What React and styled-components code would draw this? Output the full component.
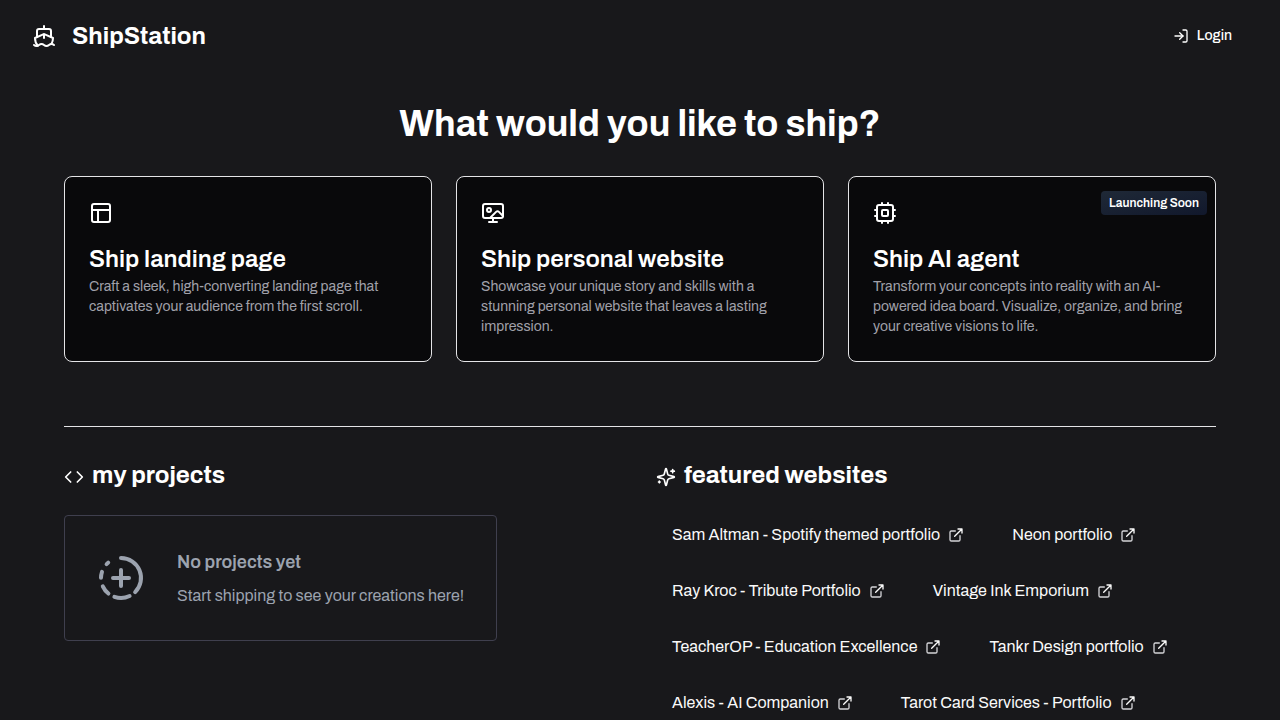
import React from "react";
import styled, { createGlobalStyle } from "styled-components";
import { Ship, LogIn, PanelsTopLeft, Wallpaper, Code } from "lucide-react";

const GlobalStyle = createGlobalStyle`
  *, *::before, *::after { box-sizing: border-box; }
  body {
    margin: 0;
    background: #18181b;
    color: #fafafa;
    font-family: Archivo, "Liberation Sans", Arial, sans-serif;
    font-size: 16px;
    line-height: 24px;
  }
  h1, h2, h3, p, ul { margin: 0; padding: 0; }
`;

const Header = styled.header`
  display: flex;
  align-items: center;
  justify-content: space-between;
  padding: 16px 32px;
`;

const Brand = styled.a`
  display: flex;
  align-items: center;
  gap: 16px;
  color: #fff;
  font-size: 24px;
  line-height: 32px;
  font-weight: 700;
  text-decoration: none;
`;

const LoginButton = styled.button`
  display: flex;
  align-items: center;
  gap: 8px;
  height: 40px;
  padding: 0 16px;
  border: 0;
  background: transparent;
  color: #fff;
  font: inherit;
  font-size: 14px;
  font-weight: 500;
  cursor: pointer;
`;

const Main = styled.main`
  padding: 32px 64px;
`;

const Title = styled.h1`
  font-size: 36px;
  line-height: 40px;
  font-weight: 700;
  text-align: center;
  color: #fff;
`;

const Cards = styled.div`
  display: grid;
  grid-template-columns: repeat(3, 1fr);
  gap: 24px;
  margin-top: 32px;
  padding-bottom: 64px;
  border-bottom: 1px solid #e4e4e7;
`;

const Card = styled.a`
  position: relative;
  display: block;
  padding: 24px;
  border: 1px solid #e4e4e7;
  border-radius: 8px;
  background: #09090b;
  color: #fff;
  text-decoration: none;
  svg { display: block; }
`;

const CardTitle = styled.h2`
  margin-top: 22px;
  font-size: 24px;
  line-height: 24px;
  font-weight: 600;
`;

const CardText = styled.p`
  margin-top: 6px;
  color: #a1a1aa;
  font-size: 14px;
  line-height: 20px;
`;

const Badge = styled.span`
  position: absolute;
  top: 14px;
  right: 8px;
  padding: 4px 8px;
  border-radius: 4px;
  background: linear-gradient(to bottom right, #1f2937, #11182c);
  font-size: 12px;
  line-height: 16px;
  font-weight: 600;
`;

const Columns = styled.div`
  display: grid;
  grid-template-columns: 1fr 1fr;
  gap: 32px;
  margin-top: 32px;
`;

const SectionTitle = styled.h2`
  display: flex;
  align-items: center;
  gap: 8px;
  color: #fff;
  font-size: 24px;
  line-height: 32px;
  font-weight: 700;
  svg { margin-top: 4px; }
`;

const EmptyState = styled.div`
  display: flex;
  align-items: center;
  gap: 32px;
  width: fit-content;
  margin-top: 24px;
  padding: 32px;
  border: 1px solid #3f3f4e;
  border-radius: 4px;
  color: #9ca3af;
`;

const EmptyTitle = styled.h3`
  font-size: 18px;
  line-height: 28px;
  font-weight: 600;
`;

const EmptyText = styled.p`
  margin-top: 8px;
`;

const SiteList = styled.ul`
  display: flex;
  flex-wrap: wrap;
  gap: 16px;
  margin-top: 24px;
  list-style: none;
`;

const SiteLink = styled.a`
  display: flex;
  align-items: center;
  gap: 8px;
  height: 40px;
  padding: 0 16px;
  color: #fafafa;
  text-decoration: none;
`;

const StrokeIcon = styled.svg.attrs({
  viewBox: "0 0 24 24",
  fill: "none",
  stroke: "currentColor",
  strokeWidth: 2,
  strokeLinecap: "round",
  strokeLinejoin: "round",
  "aria-hidden": true,
})`
  flex: none;
`;

function CpuIcon() {
  return (
    <StrokeIcon width="24" height="24">
      <rect x="4" y="4" width="16" height="16" rx="2" />
      <rect x="9" y="9" width="6" height="6" rx="1" />
      <path d="M15 2v2M15 20v2M2 15h2M2 9h2M20 15h2M20 9h2M9 2v2M9 20v2" />
    </StrokeIcon>
  );
}

function SparklesIcon() {
  return (
    <StrokeIcon width="20" height="20">
      <path d="M9.937 15.5A2 2 0 0 0 8.5 14.063l-6.135-1.582a.5.5 0 0 1 0-.962L8.5 9.936A2 2 0 0 0 9.937 8.5l1.582-6.135a.5.5 0 0 1 .963 0L14.063 8.5A2 2 0 0 0 15.5 9.937l6.135 1.581a.5.5 0 0 1 0 .964L15.5 14.063a2 2 0 0 0-1.437 1.437l-1.582 6.135a.5.5 0 0 1-.963 0z" />
      <path d="M20 3v4M22 5h-4M4 17v2M5 18H3" />
    </StrokeIcon>
  );
}

function ProgressPlusIcon() {
  return (
    <StrokeIcon width="48" height="48">
      <path d="M12 2a10 10 0 0 1 7.07 17.07" />
      <path d="M16.3 21.03a10 10 0 0 1-7.6.4" />
      <path d="M5.7 19.77a10 10 0 0 1-2.8-3.6" />
      <path d="M2 11.9a10 10 0 0 1 .5-3" />
      <path d="M4.8 5.06l.8-.74" />
      <path d="M12 8v8M8 12h8" />
    </StrokeIcon>
  );
}

function ExternalIcon() {
  return (
    <StrokeIcon width="16" height="16">
      <path stroke="#d4d4d8" d="M18 13v6a2 2 0 0 1-2 2H5a2 2 0 0 1-2-2V8a2 2 0 0 1 2-2h6" />
      <path d="M15 3h6v6M10 14 21 3" />
    </StrokeIcon>
  );
}

const products = [
  { icon: <PanelsTopLeft size={24} />, title: "Ship landing page", text: "Craft a sleek, high-converting landing page that captivates your audience from the first scroll." },
  { icon: <Wallpaper size={24} />, title: "Ship personal website", text: "Showcase your unique story and skills with a stunning personal website that leaves a lasting impression." },
  { icon: <CpuIcon />, title: "Ship AI agent", text: "Transform your concepts into reality with an AI-powered idea board. Visualize, organize, and bring your creative visions to life.", badge: "Launching Soon" },
];

const sites = [
  "Sam Altman - Spotify themed portfolio",
  "Neon portfolio",
  "Ray Kroc - Tribute Portfolio",
  "Vintage Ink Emporium",
  "TeacherOP - Education Excellence",
  "Tankr Design portfolio",
  "Alexis - AI Companion",
  "Tarot Card Services - Portfolio",
];

export default function App() {
  return (
    <>
      <GlobalStyle />
      <Header>
        <Brand href="#"><Ship size={24} />ShipStation</Brand>
        <LoginButton type="button"><LogIn size={16} />Login</LoginButton>
      </Header>
      <Main>
        <Title>What would you like to ship?</Title>
        <Cards>
          {products.map((p) => (
            <Card href="#" key={p.title}>
              {p.icon}
              {p.badge && <Badge>{p.badge}</Badge>}
              <CardTitle>{p.title}</CardTitle>
              <CardText>{p.text}</CardText>
            </Card>
          ))}
        </Cards>
        <Columns>
          <section>
            <SectionTitle><Code size={20} />my projects</SectionTitle>
            <EmptyState>
              <ProgressPlusIcon />
              <div>
                <EmptyTitle>No projects yet</EmptyTitle>
                <EmptyText>Start shipping to see your creations here!</EmptyText>
              </div>
            </EmptyState>
          </section>
          <section>
            <SectionTitle><SparklesIcon />featured websites</SectionTitle>
            <SiteList>
              {sites.map((s) => (
                <li key={s}><SiteLink href="#">{s}<ExternalIcon /></SiteLink></li>
              ))}
            </SiteList>
          </section>
        </Columns>
      </Main>
    </>
  );
}
